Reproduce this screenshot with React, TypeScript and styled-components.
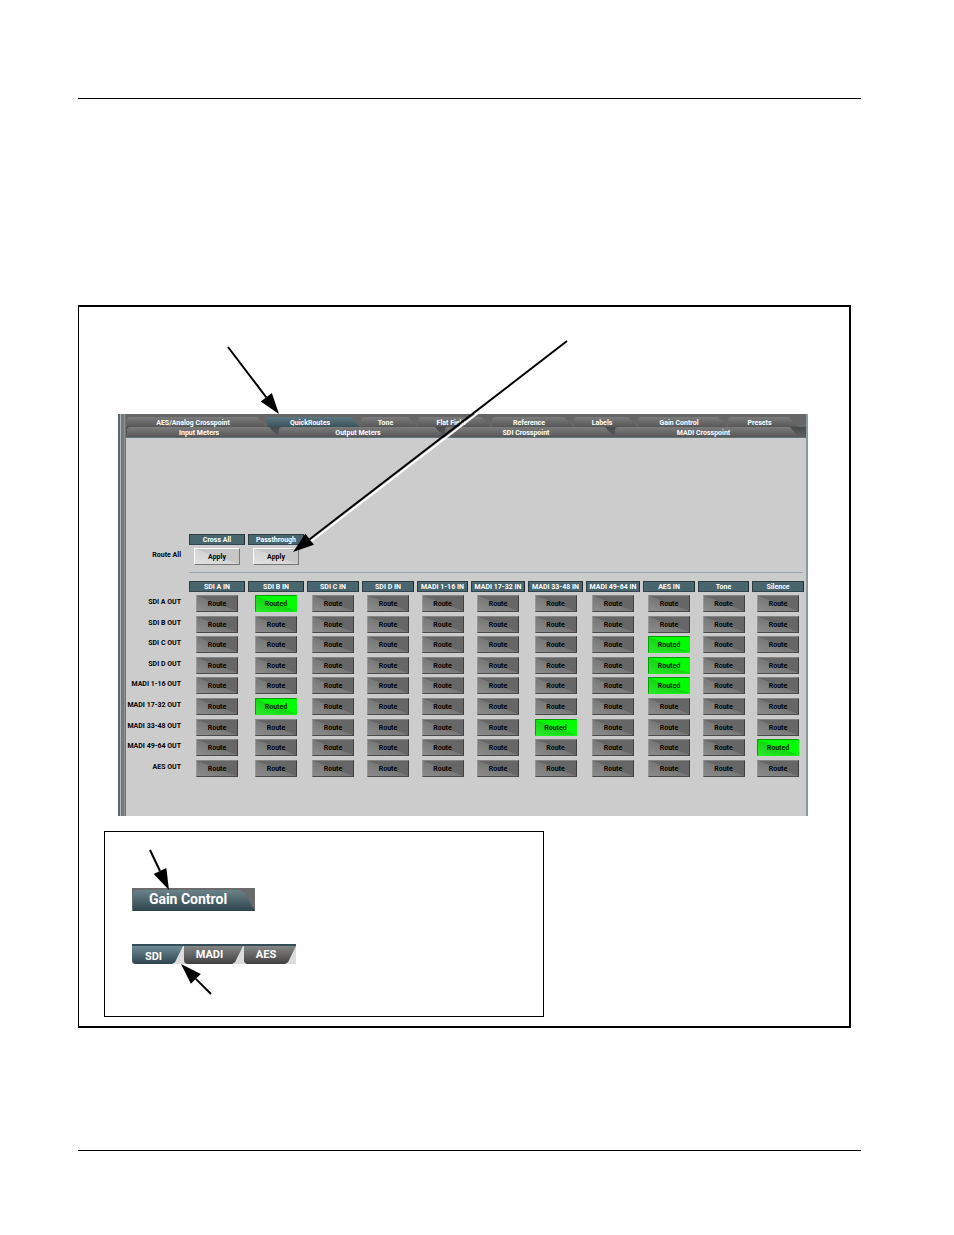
import React from "react";
import styled, { createGlobalStyle } from "styled-components";

const Global = createGlobalStyle`
  *, *::before, *::after { box-sizing: border-box; }
  body { margin: 0; background: #fff; color: #000; }
  body, button, table { font-family: Roboto, "Liberation Sans", Arial, sans-serif; }
  button { padding: 0; margin: 0; border: 0; border-radius: 0; cursor: pointer; white-space: nowrap; }
`;

const Page = styled.div`
  padding: 98px 93px 84px 78px;
`;

const Rule = styled.hr`
  margin: 0;
  border: 0;
  height: 1px;
  background: #000;
`;

const Figure = styled.figure`
  position: relative;
  margin: 206px 10px 122px 0;
  padding: 107px 41px 9px 25px;
  border: 2px solid #000;
  border-left-width: 1px;
`;

const Arrows = styled.svg`
  position: absolute;
  left: 0;
  top: 0;
  width: 770px;
  height: 719px;
  pointer-events: none;
`;

const Console = styled.section`
  display: flex;
  height: 402px;
  margin-left: 14px;
  border-right: 2px solid #8c999d;
  background: #ccc;
`;

const Splitter = styled.div`
  flex: 0 0 8px;
  background: linear-gradient(90deg, #566a70 0 2px, #b5b9ba 2px 3px, #777 3px 6px, #8d9294 6px 7px, #66757b 7px 8px);
`;

const Main = styled.div`
  flex: 1;
  min-width: 0;
`;

const TabRow = styled.div<{ $front?: boolean }>`
  display: flex;
  gap: 1px;
  height: ${(p) => (p.$front ? 11 : 13)}px;
  padding: ${(p) => (p.$front ? "0 7px 0 1px" : "3px 8px 0 1px")};
  background: ${(p) => (p.$front ? "linear-gradient(#484b4c, #5c5f60)" : "#666")};
  border-bottom: ${(p) => (p.$front ? "1px solid #62757b" : "0")};
`;

const Tab = styled.button<{ $size: number; $active?: boolean }>`
  flex: ${(p) => `${p.$size} 1 ${p.$size}px`};
  min-width: 0;
  padding: 2px 7px 0 0;
  font-size: 7px;
  line-height: 8px;
  font-weight: bold;
  color: #fff;
  border-radius: 3px 0 0 0;
  background: ${(p) =>
    p.$active ? "linear-gradient(#5d7882, #3b525b)" : "linear-gradient(#7c7c7c, #575757)"};
  clip-path: polygon(0 0, calc(100% - 9px) 0, 100% 100%, 0 100%);
`;

const Body = styled.div`
  padding: 96px 2px 0 0;
`;

const Grid = styled.table`
  width: 100%;
  table-layout: fixed;
  border-collapse: collapse;

  th, td { padding: 0; }
`;

const RoutesGrid = styled(Grid)`
  margin-top: 8px;
`;

const Separator = styled.hr`
  height: 1px;
  margin: 7px 1px 0 63px;
  border: 0;
  background: #9aa6ad;
`;

const ColumnTitle = styled.div`
  height: 11px;
  margin-right: 3px;
  border: 1px solid;
  border-color: #2c3d43 #1f2b30 #33464d #2c3d43;
  background: #49656e;
  color: #fff;
  font-size: 7px;
  line-height: 10px;
  font-weight: bold;
  text-align: center;
  white-space: nowrap;
`;

const RowTitle = styled.th`
  font-size: 7px;
  line-height: 15px;
  font-weight: bold;
  text-align: right;
  vertical-align: top;
  white-space: nowrap;

  span { padding-right: 8px; display: block; }
`;

const Cell = styled.td<{ $tall?: boolean }>`
  height: ${(p) => (p.$tall ? 21 : 20)}px;
  vertical-align: top;
  text-align: center;
`;

const Holder = styled.div`
  display: flex;
  justify-content: center;
  margin-right: 3px;
`;

const RouteButton = styled.button<{ $on: boolean }>`
  width: 42px;
  height: 17px;
  padding-top: 2px;
  border: 1px solid;
  border-color: ${(p) => (p.$on ? "#0a9a0a #00ff00 #19f019 #0a9a0a" : "#858585 #3f3f3f #4a4a4a #999")};
  background: ${(p) =>
    p.$on
      ? "linear-gradient(to top right, #2ee62e, #10d810 50%, #00ff00 51%)"
      : "linear-gradient(to top right, #8c8c8c, #787878 50%, #666 51%)"};
  color: ${(p) => (p.$on ? "#032c03" : "#000")};
  font-size: 7px;
  line-height: 13px;
  font-weight: bold;
`;

const ApplyButton = styled.button`
  width: 46px;
  height: 17px;
  padding-top: 2px;
  border: 1px solid;
  border-color: #fff #777 #777 #fff;
  background: linear-gradient(to top right, #e2e2e2, #d4d4d4 50%, #c6c6c6 51%);
  color: #000;
  font-size: 7px;
  line-height: 13px;
  font-weight: bold;
`;

const Legend = styled.div`
  width: 440px;
  height: 186px;
  margin-top: 15px;
  padding: 56px 27px 0;
  border: 1px solid #000;
`;

const SampleTop = styled.div`
  width: 123px;
  height: 23px;
  padding: 2px 0 0 1px;
  background: #6b6b6b;
`;

const SampleTab = styled.button`
  display: block;
  width: 122px;
  height: 21px;
  padding: 0 12px 3px 0;
  color: #fff;
  font-size: 14px;
  line-height: 18px;
  font-weight: bold;
  border-radius: 5px 0 0 0;
  background: linear-gradient(#6a828a, #2f454d);
  clip-path: path("M0 0H104Q110 0 113 5L122 21H0Z");
`;

const SampleRow = styled.div`
  display: flex;
  gap: 1px;
  width: 164px;
  height: 20px;
  margin-top: 33px;
  border-top: 2px solid #344e59;
  background: #dcdcdc;
`;

const SubTab = styled.button<{ $width: number; $active?: boolean }>`
  width: ${(p) => p.$width}px;
  padding: ${(p) => (p.$active ? "3px 8px 0 0" : "0 8px 0 0")};
  color: #fff;
  font-size: 11px;
  line-height: 14px;
  font-weight: bold;
  border-radius: 0 0 0 4px;
  background: ${(p) =>
    p.$active ? "linear-gradient(#6f8c97, #2d444d)" : "linear-gradient(#858585, #414141)"};
  clip-path: polygon(0 0, 100% 0, calc(100% - 8px) 90%, calc(100% - 11px) 100%, 0 100%);
`;

const backTabs = [
  { name: "AES/Analog Crosspoint", size: 139 },
  { name: "QuickRoutes", size: 93, active: true },
  { name: "Tone", size: 56 },
  { name: "Flat Field", size: 73 },
  { name: "Reference", size: 81 },
  { name: "Labels", size: 63 },
  { name: "Gain Control", size: 89 },
  { name: "Presets", size: 70 },
];

const frontTabs = [
  { name: "Input Meters", size: 151 },
  { name: "Output Meters", size: 165 },
  { name: "SDI Crosspoint", size: 169 },
  { name: "MADI Crosspoint", size: 184 },
];

const columns = [
  { name: "SDI A IN", width: 59 },
  { name: "SDI B IN", width: 59 },
  { name: "SDI C IN", width: 55 },
  { name: "SDI D IN", width: 55 },
  { name: "MADI 1-16 IN", width: 54 },
  { name: "MADI 17-32 IN", width: 57 },
  { name: "MADI 33-48 IN", width: 58 },
  { name: "MADI 49-64 IN", width: 57 },
  { name: "AES IN", width: 55 },
  { name: "Tone", width: 54 },
  { name: "Silence", width: 55 },
];

const outputs = [
  { name: "SDI A OUT", routed: "SDI B IN" },
  { name: "SDI B OUT", routed: "" },
  { name: "SDI C OUT", routed: "AES IN" },
  { name: "SDI D OUT", routed: "AES IN" },
  { name: "MADI 1-16 OUT", routed: "AES IN" },
  { name: "MADI 17-32 OUT", routed: "SDI B IN" },
  { name: "MADI 33-48 OUT", routed: "MADI 33-48 IN" },
  { name: "MADI 49-64 OUT", routed: "Silence" },
  { name: "AES OUT", routed: "" },
];

const Columns = () => (
  <colgroup>
    <col style={{ width: 63 }} />
    {columns.map((c) => (
      <col key={c.name} style={{ width: c.width }} />
    ))}
  </colgroup>
);

function RouteAll() {
  const actions = ["Cross All", "Passthrough"];
  const rest = columns.length - actions.length;
  return (
    <Grid>
      <Columns />
      <thead>
        <tr>
          <td />
          {actions.map((a) => (
            <th key={a} scope="col"><ColumnTitle>{a}</ColumnTitle></th>
          ))}
          <td colSpan={rest} />
        </tr>
        <tr><td style={{ height: 3 }} colSpan={12} /></tr>
      </thead>
      <tbody>
        <tr>
          <RowTitle scope="row"><span>Route All</span></RowTitle>
          {actions.map((a) => (
            <td key={a}>
              <Holder><ApplyButton aria-label={`Apply ${a}`}>Apply</ApplyButton></Holder>
            </td>
          ))}
          <td colSpan={rest} />
        </tr>
      </tbody>
    </Grid>
  );
}

function Routes() {
  return (
    <RoutesGrid>
      <Columns />
      <thead>
        <tr>
          <td />
          {columns.map((c) => (
            <th key={c.name} scope="col"><ColumnTitle>{c.name}</ColumnTitle></th>
          ))}
        </tr>
        <tr><td style={{ height: 3 }} colSpan={12} /></tr>
      </thead>
      <tbody>
        {outputs.map((o, i) => (
          <tr key={o.name}>
            <RowTitle scope="row"><span>{o.name}</span></RowTitle>
            {columns.map((c) => (
              <Cell key={c.name} $tall={(i % 5) % 2 === 0}>
                <Holder>
                  <RouteButton $on={o.routed === c.name}>
                    {o.routed === c.name ? "Routed" : "Route"}
                  </RouteButton>
                </Holder>
              </Cell>
            ))}
          </tr>
        ))}
      </tbody>
    </RoutesGrid>
  );
}

/* A callout line from (x1, y1) with its solid head touching (x2, y2). */
function Arrow({ x1, y1, x2, y2 }: { x1: number; y1: number; x2: number; y2: number }) {
  const len = Math.hypot(x2 - x1, y2 - y1);
  const ux = (x2 - x1) / len;
  const uy = (y2 - y1) / len;
  const bx = x2 - ux * 21;
  const by = y2 - uy * 21;
  const head = `${x2},${y2} ${bx - uy * 7},${by + ux * 7} ${bx + uy * 7},${by - ux * 7}`;
  return (
    <g>
      <line x1={x1} y1={y1} x2={bx} y2={by} stroke="#000" strokeWidth={2} />
      <polygon points={head} />
    </g>
  );
}

export default function App() {
  return (
    <>
      <Global />
      <Page>
        <Rule />
        <Figure>
          <Console>
            <Splitter />
            <Main>
              <TabRow>
                {backTabs.map((t) => (
                  <Tab key={t.name} $size={t.size} $active={t.active}>{t.name}</Tab>
                ))}
              </TabRow>
              <TabRow $front>
                {frontTabs.map((t) => (
                  <Tab key={t.name} $size={t.size}>{t.name}</Tab>
                ))}
              </TabRow>
              <Body>
                <RouteAll />
                <Separator />
                <Routes />
              </Body>
            </Main>
          </Console>
          <Legend>
            <SampleTop><SampleTab>Gain Control</SampleTab></SampleTop>
            <SampleRow>
              <SubTab $width={51} $active>SDI</SubTab>
              <SubTab $width={59}>MADI</SubTab>
              <SubTab $width={52}>AES</SubTab>
            </SampleRow>
          </Legend>
          <Arrows viewBox="0 0 770 719" aria-hidden="true">
            <line x1={489} y1={37} x2={231} y2={235} stroke="#fff" strokeWidth={2} />
            <Arrow x1={149} y1={40} x2={200} y2={107} />
            <Arrow x1={488} y1={34} x2={214} y2={245} />
            <Arrow x1={71} y1={543} x2={90} y2={583} />
            <Arrow x1={132} y1={687} x2={102} y2={657} />
          </Arrows>
        </Figure>
        <Rule />
      </Page>
    </>
  );
}
